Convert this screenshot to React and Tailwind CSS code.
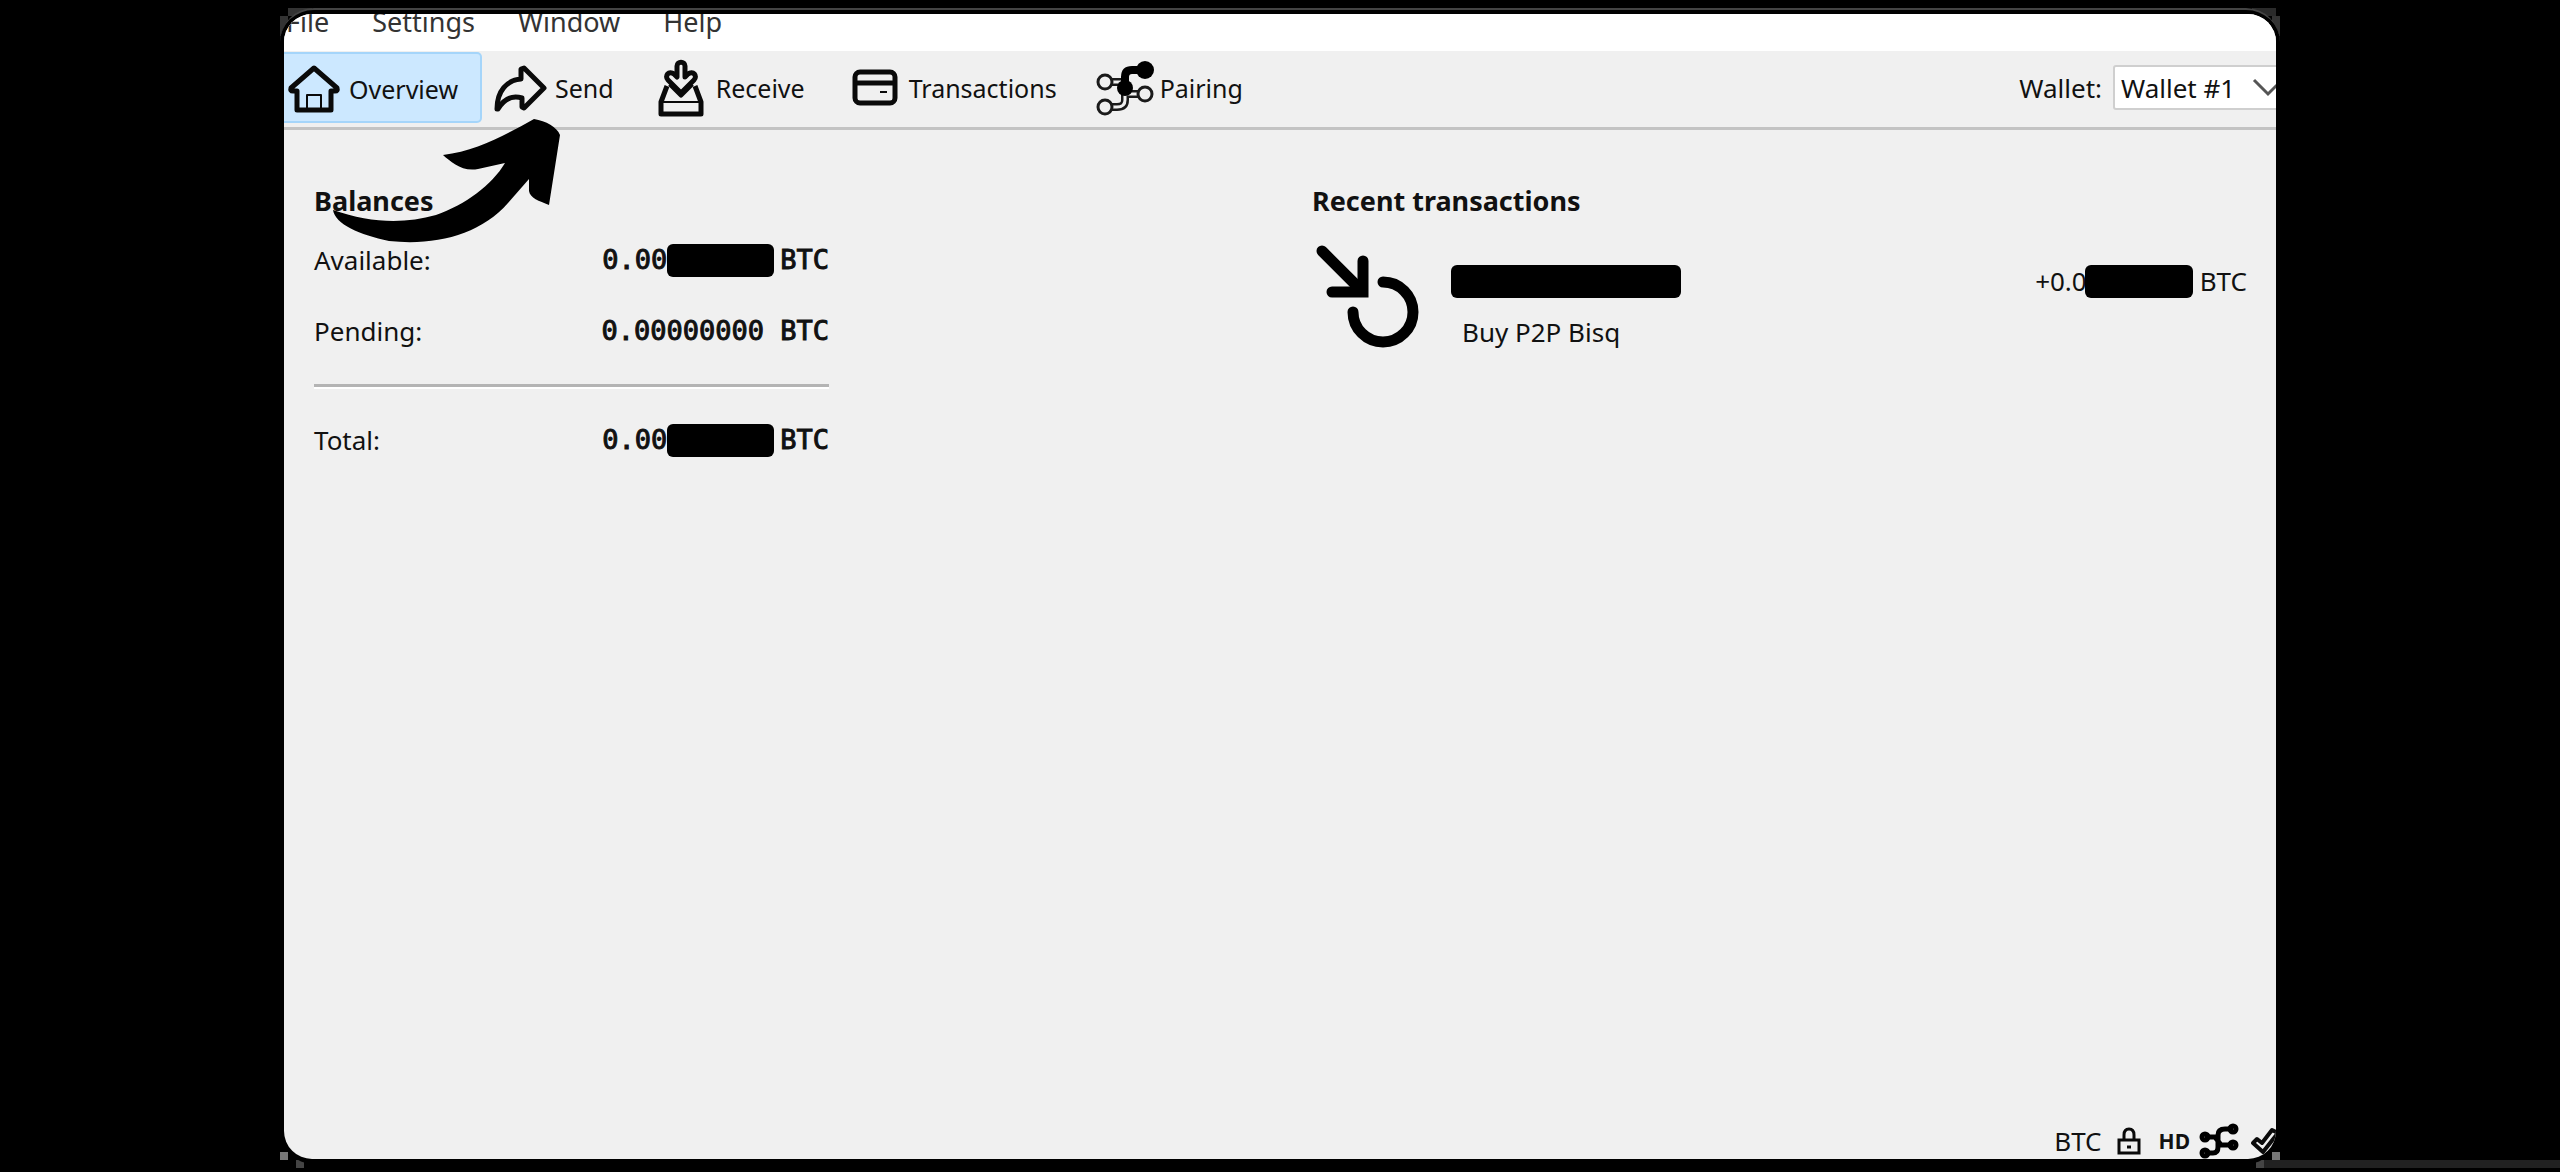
import React from "react";

function HouseIcon() {
  return (
    <svg className="h-[50px] w-[54px] shrink-0" viewBox="0 0 54 50" fill="none" stroke="#0a0a0a" strokeWidth="5" strokeLinejoin="round">
      <path d="M27 4 L50 24 Q51 27 48 27 H44 V46 H10 V27 H6 Q3 27 4 24 Z" />
      <path d="M20 46 V31 H34 V46" strokeWidth="2" />
    </svg>
  );
}

function SendIcon() {
  return (
    <svg className="h-[48px] w-[54px] shrink-0" viewBox="0 0 54 48" fill="none" stroke="#0a0a0a" strokeWidth="5" strokeLinejoin="round">
      <path d="M31 4 L51 24 L31 44 L29 43 V34 C19 31 11 35 5 45 L4 45 C4 27 14 16 28 15 V5 Z" />
    </svg>
  );
}

function ReceiveIcon() {
  return (
    <svg className="h-[58px] w-[46px] shrink-0" viewBox="0 0 46 58" fill="none" stroke="#0a0a0a" strokeLinejoin="round">
      <path d="M9 27 L3 43 V55 H43 V43 L37 27" strokeWidth="5" />
      <path d="M4 43 H42" strokeWidth="2" />
      <path d="M23 34 L10 21 C6 17 11 11 16 15 L19 18 V7 C19 2 27 2 27 7 V18 L30 15 C35 11 40 17 36 21 Z" strokeWidth="5" />
      <path d="M12 25 L23 36 L34 25" strokeWidth="5" />
    </svg>
  );
}

function CardIcon() {
  return (
    <svg className="h-[37px] w-[46px] shrink-0" viewBox="0 0 46 37" fill="none" stroke="#0a0a0a" strokeWidth="5">
      <rect x="3" y="3" width="40" height="31" rx="5" />
      <path d="M3 14 H43" strokeWidth="5" />
      <path d="M28 23 H35" strokeWidth="2" />
    </svg>
  );
}

function PairingIcon() {
  return (
    <svg className="h-[56px] w-[60px] shrink-0" viewBox="0 0 60 56" fill="none" stroke="#1a1a1a">
      <path d="M12 22 H28 M12 47 H22 Q30 47 30 40 V34 H48" strokeWidth="8" />
      <path d="M12 22 H27 M12 47 H22 Q30 47 30 40 V34 H48" stroke="#f0f0f0" strokeWidth="3" />
      <circle cx="10" cy="22" r="7" fill="#f0f0f0" strokeWidth="3" />
      <circle cx="10" cy="47" r="7" fill="#f0f0f0" strokeWidth="3" />
      <circle cx="50" cy="34" r="7" fill="#f0f0f0" strokeWidth="3" />
      <path d="M50 10 H37 Q30 10 30 17 V28" stroke="#000" strokeWidth="8" />
      <circle cx="50" cy="10" r="9" fill="#000" stroke="none" />
      <circle cx="30" cy="28" r="8" fill="#000" stroke="none" />
    </svg>
  );
}

function IncomingIcon() {
  return (
    <svg className="h-[104px] w-[104px] shrink-0" viewBox="0 0 104 104" fill="none" stroke="#000" strokeWidth="11" strokeLinecap="round">
      <path d="M6 6 L44 44" />
      <path d="M47 16 V47 H16" />
      <path d="M67 37 A30 30 0 1 1 37 67" />
    </svg>
  );
}

function LockIcon() {
  return (
    <svg className="h-[28px] w-[24px] shrink-0" viewBox="0 0 24 28" fill="none" stroke="#0a0a0a" strokeWidth="3">
      <path d="M7 13 V8 Q7 2 12 2 Q17 2 17 8 V13" />
      <rect x="2" y="13" width="20" height="13" />
      <path d="M10 20 H14" />
    </svg>
  );
}

function NetworkIcon() {
  return (
    <svg className="h-[36px] w-[40px] shrink-0" viewBox="0 0 40 36" fill="none" stroke="#000" strokeWidth="5">
      <path d="M6 14 H16 L22 22 H34 M6 30 H14 Q19 30 19 24 V12 Q19 6 26 6 H34" />
      <circle cx="6" cy="14" r="3" />
      <circle cx="6" cy="30" r="3" />
      <circle cx="34" cy="6" r="3" />
      <circle cx="34" cy="22" r="3" />
    </svg>
  );
}

function CheckIcon() {
  return (
    <svg className="h-[28px] w-[32px] shrink-0" viewBox="0 0 32 28" fill="none" stroke="#0a0a0a" strokeWidth="4" strokeLinejoin="round">
      <path d="M3 16 L7 12 L12 16 L22 3 L28 6 L13 25 Z" />
    </svg>
  );
}

function PointerArrow() {
  return (
    <svg className="pointer-events-none absolute left-[48px] top-[104px] h-[126px] w-[230px]" viewBox="332 118 230 126" fill="#000" aria-hidden="true">
      <path d="M333 210 C370 223 404 224 436 215 C465 205 492 185 505 163 L478 169 C462 172 451 162 443 155 C477 151 505 135 534 119 C546 121 557 127 560 135 L549 205 C539 201 530 198 529 191 L529 179 L508 203 C480 235 435 246 389 241 C360 235 335 224 333 210 Z" />
    </svg>
  );
}

function CornerShade() {
  return (
    <div aria-hidden="true">
      <span className="absolute left-[8px] top-0 h-[8px] w-[24px] bg-[#333]" />
      <span className="absolute left-0 top-[8px] h-[20px] w-[8px] bg-[#333]" />
      <span className="absolute right-[4px] top-0 h-[8px] w-[24px] bg-[#2a2a2a]" />
      <span className="absolute right-0 top-[8px] h-[20px] w-[8px] bg-[#333]" />
      <span className="absolute bottom-[4px] left-0 h-[8px] w-[8px] bg-[#777]" />
      <span className="absolute -bottom-[4px] left-[16px] h-[8px] w-[8px] bg-[#444]" />
      <span className="absolute bottom-[4px] right-0 h-[8px] w-[8px] bg-[#777]" />
      <span className="absolute -bottom-[4px] right-[16px] h-[8px] w-[8px] bg-[#444]" />
      <span className="absolute -bottom-[4px] left-full -ml-[16px] h-[8px] w-[296px] bg-[#212121]" />
    </div>
  );
}

function ToolButton({ icon, label, active, className }) {
  return (
    <button
      type="button"
      className={
        (active
          ? "rounded-r-[5px] border-2 border-l-0 border-[#a5d5fa] bg-[#cce8ff] "
          : "border-2 border-transparent ") +
        "flex h-[71px] items-center whitespace-nowrap " + className
      }
    >
      {icon}
      <span>{label}</span>
    </button>
  );
}

function Redacted({ className }) {
  return <span className={"inline-block h-[33px] rounded-[6px] bg-black " + className} aria-hidden="true" />;
}

function BalanceRow({ label, hidden, className }) {
  return (
    <div className={"flex h-[36px] items-center justify-between " + className}>
      <dt>{label}</dt>
      <dd className="flex items-center whitespace-pre font-['DejaVu_Sans_Mono',monospace] text-[27px] [-webkit-text-stroke:1px]">
        {hidden ? (
          <>
            <span>0.00</span>
            <Redacted className="mr-[6px] w-[107px]" />
            <span>BTC</span>
          </>
        ) : (
          <span>0.00000000 BTC</span>
        )}
      </dd>
    </div>
  );
}

export default function App() {
  return (
    <div className="h-screen overflow-hidden bg-black px-[280px] py-[8px] font-['Noto_Sans',sans-serif] text-[26px] leading-[36px] text-[#111]">
      <div className="relative h-full">
        <CornerShade />
        <div className="relative h-full rounded-[34px] border-t-2 border-[#444] bg-black px-[4px] pb-[5px] pt-[4px]">
          <div className="relative flex h-full flex-col overflow-hidden rounded-[28px] bg-[#f0f0f0]">
            <nav className="flex h-[37px] shrink-0 items-end overflow-hidden bg-white text-[27px] text-[#333]">
              <div className="flex h-[46px] items-center gap-[43px] pb-[12px] pl-[2px]">
                <button type="button">File</button>
                <button type="button">Settings</button>
                <button type="button">Window</button>
                <button type="button">Help</button>
              </div>
            </nav>

            <header className="flex h-[79px] shrink-0 items-start border-b-[3px] border-[#c3c3c3] pt-[1px]">
              <div className="flex text-[25px]">
                <ToolButton active icon={<HouseIcon />} label="Overview" className="w-[198px] gap-[8px] pl-[3px] pt-[2px]" />
                <ToolButton icon={<SendIcon />} label="Send" className="ml-[9px] gap-[8px]" />
                <ToolButton icon={<ReceiveIcon />} label="Receive" className="ml-[40px] gap-[12px]" />
                <ToolButton icon={<CardIcon />} label="Transactions" className="ml-[43px] gap-[11px]" />
                <ToolButton icon={<PairingIcon />} label="Pairing" className="ml-[34px] gap-[5px]" />
              </div>
              <div className="ml-auto flex h-[71px] items-center gap-[11px]">
                <label htmlFor="wallet">Wallet:</label>
                <div className="relative -mr-[12px] flex items-center">
                  <select id="wallet" className="h-[45px] w-[175px] appearance-none rounded-[3px] border-2 border-[#cfcfcf] bg-white pl-[6px]">
                    <option>Wallet #1</option>
                  </select>
                  <svg className="pointer-events-none absolute right-[4px] h-[20px] w-[32px]" viewBox="0 0 32 20" fill="none" stroke="#555" strokeWidth="3">
                    <path d="M2 2 L16 16 L30 2" />
                  </svg>
                </div>
              </div>
            </header>

            <main className="grid flex-1 grid-cols-2 pt-[53px]">
              <section className="pl-[30px]">
                <h2 className="text-[27px] font-bold">Balances</h2>
                <dl className="w-[515px]">
                  <BalanceRow hidden label="Available:" className="mt-[23px]" />
                  <BalanceRow label="Pending:" className="mt-[35px]" />
                  <div className="mt-[35px] border-b-2 border-t-[3px] border-b-white border-t-[#b4b4b4]" />
                  <BalanceRow hidden label="Total:" className="mt-[33px]" />
                </dl>
              </section>
              <section className="pl-[32px] pr-[29px]">
                <h2 className="text-[27px] font-bold">Recent transactions</h2>
                <div className="ml-[4px] mt-[26px] flex">
                  <IncomingIcon />
                  <div className="ml-[31px] flex-1">
                    <div className="mt-[18px] flex items-center justify-between">
                      <Redacted className="w-[230px]" />
                      <div className="flex items-center">
                        <span>+0.0</span>
                        <Redacted className="-ml-[2px] mr-[7px] w-[108px]" />
                        <span>BTC</span>
                      </div>
                    </div>
                    <p className="ml-[11px] mt-[15px]">Buy P2P Bisq</p>
                  </div>
                </div>
              </section>
            </main>

            <footer className="flex h-[37px] shrink-0 items-center justify-end">
              <span className="mr-[15px]">BTC</span>
              <LockIcon />
              <span className="ml-[18px] mr-[9px] text-[21px] font-bold">HD</span>
              <NetworkIcon />
              <div className="-mr-[6px] ml-[11px] flex">
                <CheckIcon />
              </div>
            </footer>

            <PointerArrow />
          </div>
        </div>
      </div>
    </div>
  );
}
